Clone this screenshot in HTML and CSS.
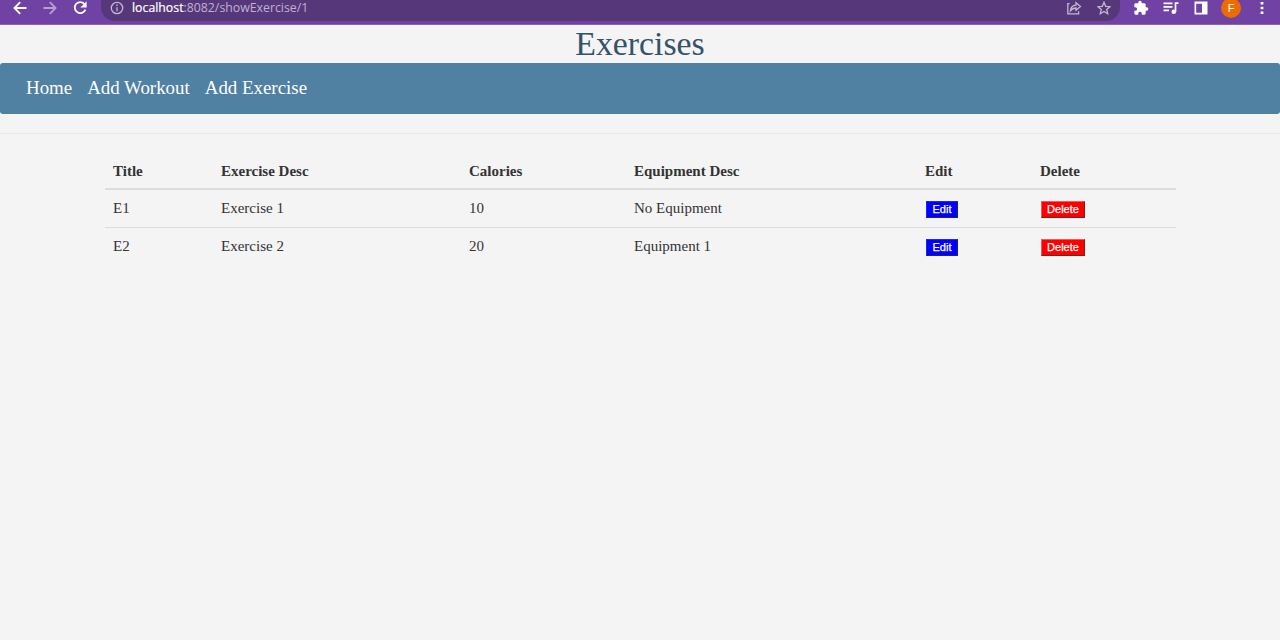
FILE: index.html
```
<!DOCTYPE html>
<html lang="en">
<head>
<meta charset="utf-8">
<title>Exercises</title>
<link rel="stylesheet" href="styles.css">
</head>
<body>
<div class="browser">
  <div class="controls">
    <svg class="back" width="14" height="14" viewBox="0 0 14 14"><path d="M13.5 7H1.5M7.2 1.2L1.4 7l5.8 5.8"/></svg>
    <svg class="forward" width="14" height="14" viewBox="0 0 14 14"><path d="M.5 7h12M6.8 1.2L12.6 7l-5.8 5.8"/></svg>
    <svg class="reload" width="14" height="14" viewBox="0 0 14 14"><path d="M11.6 3.2A5.5 5.5 0 1 0 12.4 8.6"/><path class="solid" d="M13.6.2v6.2H7.4z"/></svg>
  </div>
  <div class="address">
    <svg class="info" width="14" height="14" viewBox="0 0 14 14"><circle cx="7" cy="7" r="5.7"/><path d="M7 6.3v3.9M7 3.6v1.5"/></svg>
    <span class="url"><span class="host">localhost</span>:8082/showExercise/1</span>
    <svg class="share" width="16" height="14" viewBox="0 0 16 14"><path d="M3.600 2.600H1.800v10.200h10.800v-2.500M4.400 9.800C4.800 6.200 7 4.400 10 4.200V1.700L14.400 5.600 10 9.300V7C7.400 7 5.800 7.900 4.400 9.800z"/></svg>
    <svg class="star" width="14" height="14" viewBox="0 0 14 14"><path d="M7 1.300l1.700 4 4.300.4-3.300 2.800 1 4.200L7 10.400l-3.700 2.300 1-4.200L1 5.700l4.300-.4z"/></svg>
  </div>
  <div class="tools">
    <svg width="16" height="16" viewBox="0 0 24 24"><path fill="#fff" d="M20.500 11H19V7c0-1.100-.9-2-2-2h-4V3.500a2.500 2.500 0 0 0-5 0V5H4c-1.100 0-2 .9-2 2v3.800h1.500a2.700 2.700 0 0 1 0 5.400H2V20c0 1.100.9 2 2 2h3.800v-1.500a2.700 2.700 0 0 1 5.400 0V22H17c1.100 0 2-.9 2-2v-4h1.500a2.500 2.500 0 0 0 0-5z"/></svg>
    <svg width="16" height="14" viewBox="0 0 16 14"><path d="M.5 2.300h9M.5 5.800h9M.5 9.300h5.500M12.500 11V2.200h3" fill="none" stroke="#fff" stroke-width="1.700"/><circle cx="10.800" cy="10.700" r="2.300" fill="#fff"/></svg>
    <svg width="14" height="14" viewBox="0 0 14 14"><path fill="#fff" fill-rule="evenodd" d="M.5.500h13v13H.500zM2.200 2.800v8.900H8V2.800z"/></svg>
    <span class="avatar">F</span>
    <svg class="dots" width="4" height="14" viewBox="0 0 4 14"><path fill="#fff" d="M.6 1h2.800v2.500H.6zM.6 5.800h2.800v2.500H.6zM.6 10.600h2.800v2.500H.6z"/></svg>
  </div>
</div>
<h1 class="title">Exercises</h1>
<nav class="navbar"><a>Home</a><a>Add Workout</a><a>Add Exercise</a></nav>
<hr class="divider">
<table class="exercises">
  <colgroup><col class="c-title"><col class="c-desc"><col class="c-cal"><col class="c-equip"><col class="c-edit"><col></colgroup>
  <thead><tr><th>Title</th><th>Exercise Desc</th><th>Calories</th><th>Equipment Desc</th><th>Edit</th><th>Delete</th></tr></thead>
  <tbody>
    <tr><td>E1</td><td>Exercise 1</td><td>10</td><td>No Equipment</td><td><button class="edit">Edit</button></td><td><button class="delete">Delete</button></td></tr>
    <tr><td>E2</td><td>Exercise 2</td><td>20</td><td>Equipment 1</td><td><button class="edit">Edit</button></td><td><button class="delete">Delete</button></td></tr>
  </tbody>
</table>
</body>
</html>
```
FILE: styles.css
```
* { box-sizing: border-box; }
body { margin: 0; min-height: 640px; background: #f4f4f4; color: #333; font-family: "Liberation Serif", "Times New Roman", serif; font-size: 15px; }
svg { display: block; flex: none; }
.browser { display: flex; height: 25px; background: #6f42a3; border-bottom: 1px solid #8a67b2; }
.controls { display: flex; gap: 16px; width: 101px; padding: 1px 0 0 13px; fill: none; stroke: #fff; stroke-width: 1.800; }
.controls .forward { opacity: .5; }
.controls .solid { fill: #fff; stroke: none; }
.address { display: flex; align-items: flex-start; width: 1019px; height: 21px; padding: 1px 9px 0 9px; border-radius: 0 0 14px 14px; background: #56387a; fill: none; stroke: #c4b7d2; stroke-width: 1.300; }
.url { margin: -2px auto 0 8px; color: #c0b0d2; font: 12.300px/18px "Open Sans", "Noto Sans", sans-serif; white-space: nowrap; }
.host { color: #fff; -webkit-text-stroke: .2px #fff; }
.share { margin-right: 15px; }
.tools { display: flex; align-items: flex-start; padding: 0 0 0 13px; }
.tools > * { flex: none; margin-right: 14px; }
.tools > :nth-child(2), .tools > :nth-child(3) { margin-top: 1px; }
.tools > :nth-child(2) { margin-right: 15px; }
.tools > .avatar { display: block; width: 20px; height: 20px; margin: -2px 19px 0 -1px; border-radius: 50%; background: #ed6c02; color: #fff; font: 11px/20px "Liberation Sans", sans-serif; text-align: center; }
.tools > .dots { margin: 1px 0 0; }
.title { height: 38px; margin: 0; color: #34536b; font-size: 33.800px; font-weight: 400; line-height: 38px; text-align: center; }
.navbar { display: flex; gap: 15px; height: 51px; padding: 0 26px; border-radius: 3px; background: #5080a2; color: #fff; font-size: 18.900px; line-height: 50px; }
.divider { height: 1px; margin: 19px 0; border: 0; background: #e9e9e9; }
.exercises { width: 1071px; margin: 0 0 0 105px; border-collapse: separate; border-spacing: 0; table-layout: fixed; line-height: 20px; }
.c-title { width: 108px; }
.c-desc { width: 248px; }
.c-cal { width: 165px; }
.c-equip { width: 291px; }
.c-edit { width: 115px; }
.exercises th { height: 37px; padding: 0 8px; border-bottom: 2px solid #dcdcdc; text-align: left; }
.exercises td { height: 38px; padding: 0 8px 1px; vertical-align: middle; }
.exercises tbody tr:last-child td { height: 37px; }
.exercises tbody tr:first-child td { border-bottom: 1px solid #dcdcdc; }
.exercises button { display: block; height: 17px; margin: 2px 0 0 1px; padding: 0; border: 1px solid; color: #fff; font: 11px/15px "Liberation Sans", Arial, sans-serif; -webkit-text-stroke: .25px #fff; }
.exercises .edit { width: 32px; border-color: #2525ee #202080 #202080 #2525ee; background: #00f; }
.exercises .delete { width: 44px; border-color: #f55 #722 #722 #f55; background: red; }
```
